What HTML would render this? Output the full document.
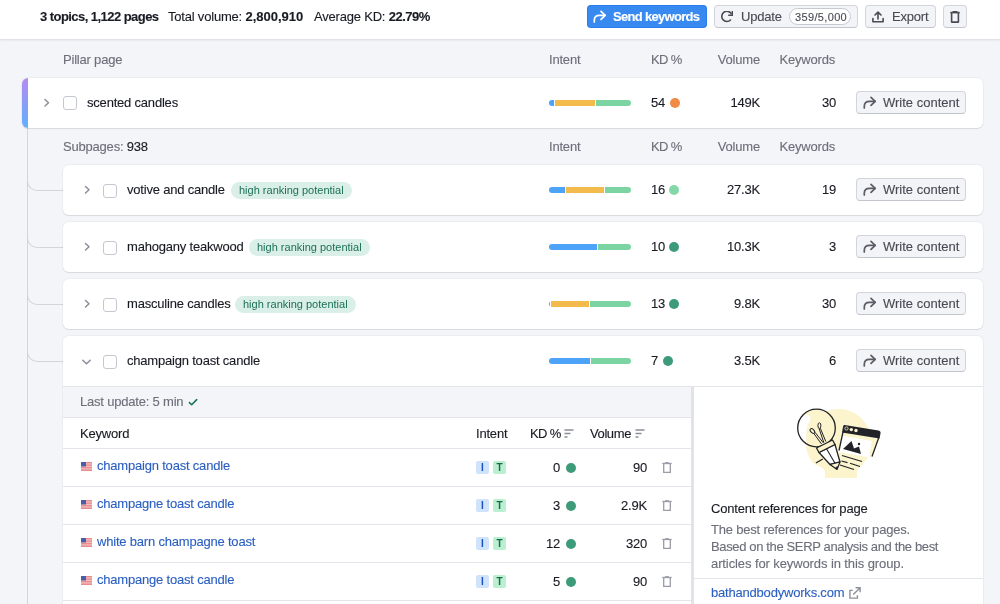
<!DOCTYPE html><html><head><meta charset="utf-8"><style>
*{box-sizing:border-box;margin:0;padding:0}
html,body{width:1000px;height:604px;overflow:hidden;background:#f4f5f9;font-family:"Liberation Sans",sans-serif;color:#191b23;font-size:13px;letter-spacing:-0.2px}
.a{position:absolute;white-space:nowrap;line-height:16px;will-change:transform;-webkit-text-stroke:0.12px}
b{letter-spacing:-0.5px}
.top{position:absolute;left:0;top:0;width:1000px;height:40px;background:#fff;border-bottom:1px solid #e2e3e9;box-shadow:0 1px 2px rgba(25,27,35,0.05)}
.g{color:#6c6e79}
.card{position:absolute;background:#fff;border-radius:6px;box-shadow:0 0 0 1px rgba(25,27,35,0.035),0 1px 1px rgba(25,27,35,0.09)}
.btn{position:absolute;height:23px;border:1px solid #d3d5dc;border-bottom-color:#c3c5cd;border-radius:4px;background:#f3f4f7;color:#484a54}
.chk{position:absolute;width:14px;height:14px;border:1px solid #c5c8d0;border-radius:3px;background:#fff}
.bar{position:absolute;height:6px;border-radius:3px;overflow:hidden;width:82px;background:#fff}
.bar i{position:absolute;top:0;height:6px}
.dot{position:absolute;width:10px;height:10px;border-radius:5px}
.tag{will-change:transform;position:absolute;height:17px;border-radius:9px;background:#d9efe7;color:#1d7058;font-size:11px;line-height:17px;padding:0 8px;letter-spacing:0}
.chev{position:absolute}
.blue{color:#2b5fc0}
.ib{will-change:transform;position:absolute;width:13px;height:13px;border-radius:2px;font-size:10px;line-height:13px;text-align:center;font-weight:bold;letter-spacing:0}
</style></head><body>
<div class="top"></div>
<div class="a" style="left:40px;top:9px;font-weight:bold;letter-spacing:-0.55px">3 topics, 1,122 pages</div>
<div class="a" style="left:168px;top:9px">Total volume: <b style="letter-spacing:0">2,800,910</b></div>
<div class="a" style="left:314px;top:9px">Average KD: <b>22.79%</b></div>
<div class="a" style="left:587px;top:5px;width:120px;height:23px;background:#3889f0;border-radius:4px;box-shadow:inset 0 0 0 1px rgba(0,90,220,0.25)"></div>
<div class="a" style="left:593px;top:10px;width:14px;height:13px"><svg width="14" height="13" viewBox="0 0 14 13" style="position:absolute;left:0;top:0"><path d="M1.3 12 V10.2 C1.3 7 3.3 5.3 6.5 5.3 H12" fill="none" stroke="#fff" stroke-width="1.7" stroke-linecap="round" stroke-linejoin="round"/><path d="M8 1.3 L12.2 5.3 L8 9.3" fill="none" stroke="#fff" stroke-width="1.7" stroke-linecap="round" stroke-linejoin="round"/></svg></div>
<div class="a" style="left:613px;top:9px;color:#fff;font-weight:bold;letter-spacing:-0.7px">Send keywords</div>
<div class="btn" style="left:714px;top:5px;width:144px"></div>
<svg class="a" style="left:721px;top:11px" width="12" height="12" viewBox="0 0 12 12"><path d="M9.5 9.0 A5.1 5.1 0 1 1 10.1 2.5" fill="none" stroke="#484a54" stroke-width="1.6" stroke-linecap="round"/><path d="M11.4 0.4 V4.3 H7.8" fill="none" stroke="#484a54" stroke-width="1.6" stroke-linecap="round" stroke-linejoin="round"/></svg>
<div class="a" style="left:741px;top:9px;color:#484a54">Update</div>
<div class="a" style="left:789px;top:8px;width:62px;height:17px;border:1px solid #c7c9d1;border-radius:9px;background:#fff"></div>
<div class="a" style="left:795px;top:9px;font-size:11px;line-height:16px;color:#484a54;letter-spacing:0.35px">359/5,000</div>
<div class="btn" style="left:865px;top:5px;width:71px"></div>
<svg class="a" style="left:872px;top:11px" width="12" height="12" viewBox="0 0 12 12"><path d="M6 8 V1.2 M3 4 L6 1.2 L9 4" fill="none" stroke="#484a54" stroke-width="1.6" stroke-linecap="round" stroke-linejoin="round"/><path d="M0.9 7.5 V10.8 H11.1 V7.5" fill="none" stroke="#484a54" stroke-width="1.6" stroke-linecap="round" stroke-linejoin="round"/></svg>
<div class="a" style="left:892px;top:9px;color:#484a54">Export</div>
<div class="btn" style="left:943px;top:5px;width:24px"></div>
<svg class="a" style="left:950px;top:11px" width="10" height="12" viewBox="0 0 10 12"><path d="M0.3 1.6 H9.7" stroke="#484a54" stroke-width="1.6"/><path d="M3.2 1.2 V0.6 H6.8 V1.2" stroke="#484a54" stroke-width="1.2" fill="none"/><path d="M1.6 2 V11.1 H8.4 V2" fill="none" stroke="#484a54" stroke-width="1.6" stroke-linejoin="round"/></svg>
<div class="a g" style="left:63px;top:52px">Pillar page</div>
<div class="a g" style="left:549px;top:52px">Intent</div>
<div class="a g" style="left:651px;top:52px;letter-spacing:-0.6px">KD %</div>
<div class="a g" style="left:680px;top:52px;width:80px;text-align:right">Volume</div>
<div class="a g" style="left:755px;top:52px;width:80px;text-align:right">Keywords</div>
<div class="a" style="left:27px;top:128px;width:1px;height:476px;background:#d3d5dc"></div>
<div class="a" style="left:27px;top:180px;width:36px;height:11px;border-left:1px solid #d3d5dc;border-bottom:1px solid #d3d5dc;border-bottom-left-radius:10px"></div>
<div class="a" style="left:27px;top:237px;width:36px;height:11px;border-left:1px solid #d3d5dc;border-bottom:1px solid #d3d5dc;border-bottom-left-radius:10px"></div>
<div class="a" style="left:27px;top:294px;width:36px;height:11px;border-left:1px solid #d3d5dc;border-bottom:1px solid #d3d5dc;border-bottom-left-radius:10px"></div>
<div class="a" style="left:27px;top:351px;width:36px;height:11px;border-left:1px solid #d3d5dc;border-bottom:1px solid #d3d5dc;border-bottom-left-radius:10px"></div>
<div class="card" style="left:22px;top:78px;width:961px;height:50px;overflow:hidden"><div style="position:absolute;left:0;top:0;width:6px;height:50px;background:linear-gradient(#b68af3,#60b0fa)"></div></div>
<svg class="a" style="left:43px;top:97px" width="9" height="12" viewBox="0 0 9 12"><path d="M2 2.5 L5.5 5.75 L2 9" fill="none" stroke="#8b8e9a" stroke-width="1.5" stroke-linecap="round" stroke-linejoin="round"/></svg>
<div class="chk" style="left:63px;top:96px"></div>
<div class="a" style="left:87px;top:95px">scented candles</div>
<div class="bar" style="left:549px;top:100px"><i style="left:0px;width:5px;background:#4da3f7"></i><i style="left:6px;width:40px;background:#f3bb4b"></i><i style="left:47px;width:35px;background:#7dd4a3"></i></div>
<div class="a" style="left:651px;top:95px">54</div>
<div class="dot" style="left:670px;top:98px;background:#f08a45"></div>
<div class="a" style="left:680px;top:95px;width:80px;text-align:right">149K</div>
<div class="a" style="left:756px;top:95px;width:80px;text-align:right">30</div>
<div class="btn" style="left:856px;top:91px;width:110px"></div>
<div class="a" style="left:863px;top:96px;width:14px;height:13px"><svg width="14" height="13" viewBox="0 0 14 13" style="position:absolute;left:0;top:0"><path d="M1.3 12 V10.2 C1.3 7 3.3 5.3 6.5 5.3 H12" fill="none" stroke="#5a5c66" stroke-width="1.7" stroke-linecap="round" stroke-linejoin="round"/><path d="M8 1.3 L12.2 5.3 L8 9.3" fill="none" stroke="#5a5c66" stroke-width="1.7" stroke-linecap="round" stroke-linejoin="round"/></svg></div>
<div class="a" style="left:883px;top:95px;color:#484a54;letter-spacing:0">Write content</div>
<div class="a g" style="left:63px;top:139px">Subpages: <span style="color:#191b23">938</span></div>
<div class="a g" style="left:549px;top:139px">Intent</div>
<div class="a g" style="left:651px;top:139px;letter-spacing:-0.6px">KD %</div>
<div class="a g" style="left:680px;top:139px;width:80px;text-align:right">Volume</div>
<div class="a g" style="left:755px;top:139px;width:80px;text-align:right">Keywords</div>
<div class="card" style="left:63px;top:165px;width:920px;height:50px"></div>
<svg class="a" style="left:83px;top:184px" width="9" height="12" viewBox="0 0 9 12"><path d="M2.5 2.5 L6.0 5.75 L2.5 9" fill="none" stroke="#8b8e9a" stroke-width="1.5" stroke-linecap="round" stroke-linejoin="round"/></svg>
<div class="chk" style="left:103px;top:184px"></div>
<div class="a" style="left:127px;top:182px">votive and candle</div>
<div class="tag" style="left:231px;top:182px">high ranking potential</div>
<div class="bar" style="left:549px;top:187px"><i style="left:0px;width:16px;background:#4da3f7"></i><i style="left:17px;width:38px;background:#f3bb4b"></i><i style="left:56px;width:26px;background:#7dd4a3"></i></div>
<div class="a" style="left:651px;top:182px">16</div>
<div class="dot" style="left:669px;top:185px;background:#84d8a8"></div>
<div class="a" style="left:680px;top:182px;width:80px;text-align:right">27.3K</div>
<div class="a" style="left:756px;top:182px;width:80px;text-align:right">19</div>
<div class="btn" style="left:856px;top:178px;width:110px"></div>
<div class="a" style="left:863px;top:183px;width:14px;height:13px"><svg width="14" height="13" viewBox="0 0 14 13" style="position:absolute;left:0;top:0"><path d="M1.3 12 V10.2 C1.3 7 3.3 5.3 6.5 5.3 H12" fill="none" stroke="#5a5c66" stroke-width="1.7" stroke-linecap="round" stroke-linejoin="round"/><path d="M8 1.3 L12.2 5.3 L8 9.3" fill="none" stroke="#5a5c66" stroke-width="1.7" stroke-linecap="round" stroke-linejoin="round"/></svg></div>
<div class="a" style="left:883px;top:182px;color:#484a54;letter-spacing:0">Write content</div>
<div class="card" style="left:63px;top:222px;width:920px;height:50px"></div>
<svg class="a" style="left:83px;top:241px" width="9" height="12" viewBox="0 0 9 12"><path d="M2.5 2.5 L6.0 5.75 L2.5 9" fill="none" stroke="#8b8e9a" stroke-width="1.5" stroke-linecap="round" stroke-linejoin="round"/></svg>
<div class="chk" style="left:103px;top:241px"></div>
<div class="a" style="left:127px;top:239px">mahogany teakwood</div>
<div class="tag" style="left:249px;top:239px">high ranking potential</div>
<div class="bar" style="left:549px;top:244px"><i style="left:0px;width:48px;background:#4da3f7"></i><i style="left:49px;width:33px;background:#7dd4a3"></i></div>
<div class="a" style="left:651px;top:239px">10</div>
<div class="dot" style="left:669px;top:242px;background:#3e9b7a"></div>
<div class="a" style="left:680px;top:239px;width:80px;text-align:right">10.3K</div>
<div class="a" style="left:756px;top:239px;width:80px;text-align:right">3</div>
<div class="btn" style="left:856px;top:235px;width:110px"></div>
<div class="a" style="left:863px;top:240px;width:14px;height:13px"><svg width="14" height="13" viewBox="0 0 14 13" style="position:absolute;left:0;top:0"><path d="M1.3 12 V10.2 C1.3 7 3.3 5.3 6.5 5.3 H12" fill="none" stroke="#5a5c66" stroke-width="1.7" stroke-linecap="round" stroke-linejoin="round"/><path d="M8 1.3 L12.2 5.3 L8 9.3" fill="none" stroke="#5a5c66" stroke-width="1.7" stroke-linecap="round" stroke-linejoin="round"/></svg></div>
<div class="a" style="left:883px;top:239px;color:#484a54;letter-spacing:0">Write content</div>
<div class="card" style="left:63px;top:279px;width:920px;height:50px"></div>
<svg class="a" style="left:83px;top:298px" width="9" height="12" viewBox="0 0 9 12"><path d="M2.5 2.5 L6.0 5.75 L2.5 9" fill="none" stroke="#8b8e9a" stroke-width="1.5" stroke-linecap="round" stroke-linejoin="round"/></svg>
<div class="chk" style="left:103px;top:298px"></div>
<div class="a" style="left:127px;top:296px">masculine candles</div>
<div class="tag" style="left:235px;top:296px">high ranking potential</div>
<div class="bar" style="left:549px;top:301px"><i style="left:0px;width:1px;background:#4da3f7"></i><i style="left:2px;width:38px;background:#f3bb4b"></i><i style="left:41px;width:41px;background:#7dd4a3"></i></div>
<div class="a" style="left:651px;top:296px">13</div>
<div class="dot" style="left:669px;top:299px;background:#3e9b7a"></div>
<div class="a" style="left:680px;top:296px;width:80px;text-align:right">9.8K</div>
<div class="a" style="left:756px;top:296px;width:80px;text-align:right">30</div>
<div class="btn" style="left:856px;top:292px;width:110px"></div>
<div class="a" style="left:863px;top:297px;width:14px;height:13px"><svg width="14" height="13" viewBox="0 0 14 13" style="position:absolute;left:0;top:0"><path d="M1.3 12 V10.2 C1.3 7 3.3 5.3 6.5 5.3 H12" fill="none" stroke="#5a5c66" stroke-width="1.7" stroke-linecap="round" stroke-linejoin="round"/><path d="M8 1.3 L12.2 5.3 L8 9.3" fill="none" stroke="#5a5c66" stroke-width="1.7" stroke-linecap="round" stroke-linejoin="round"/></svg></div>
<div class="a" style="left:883px;top:296px;color:#484a54;letter-spacing:0">Write content</div>
<div class="card" style="left:63px;top:336px;width:920px;height:290px;border-radius:6px 6px 0 0"></div>
<svg class="a" style="left:81px;top:358px" width="11" height="8" viewBox="0 0 11 8"><path d="M1.8 2.3 L5.5 5.8 L9.2 2.3" fill="none" stroke="#8b8e9a" stroke-width="1.5" stroke-linecap="round" stroke-linejoin="round"/></svg>
<div class="chk" style="left:103px;top:355px"></div>
<div class="a" style="left:127px;top:353px">champaign toast candle</div>
<div class="bar" style="left:549px;top:358px"><i style="left:0px;width:41px;background:#4da3f7"></i><i style="left:42px;width:40px;background:#7dd4a3"></i></div>
<div class="a" style="left:651px;top:353px">7</div>
<div class="dot" style="left:663px;top:356px;background:#3e9b7a"></div>
<div class="a" style="left:680px;top:353px;width:80px;text-align:right">3.5K</div>
<div class="a" style="left:756px;top:353px;width:80px;text-align:right">6</div>
<div class="btn" style="left:856px;top:349px;width:110px"></div>
<div class="a" style="left:863px;top:354px;width:14px;height:13px"><svg width="14" height="13" viewBox="0 0 14 13" style="position:absolute;left:0;top:0"><path d="M1.3 12 V10.2 C1.3 7 3.3 5.3 6.5 5.3 H12" fill="none" stroke="#5a5c66" stroke-width="1.7" stroke-linecap="round" stroke-linejoin="round"/><path d="M8 1.3 L12.2 5.3 L8 9.3" fill="none" stroke="#5a5c66" stroke-width="1.7" stroke-linecap="round" stroke-linejoin="round"/></svg></div>
<div class="a" style="left:883px;top:353px;color:#484a54;letter-spacing:0">Write content</div>
<div class="a" style="left:63px;top:386px;width:920px;height:1px;background:#e4e5eb"></div>
<div class="a" style="left:63px;top:387px;width:628px;height:31px;background:#f4f5f9;border-bottom:1px solid #e4e5eb"></div>
<div class="a g" style="left:80px;top:394px">Last update: 5 min</div>
<svg class="a" style="left:188px;top:398px" width="10" height="8" viewBox="0 0 10 8"><path d="M1.4 4.6 L3.7 6.7 L8.7 1.6" fill="none" stroke="#14704f" stroke-width="1.5" stroke-linecap="round" stroke-linejoin="round"/></svg>
<div class="a" style="left:63px;top:448px;width:628px;height:1px;background:#e4e5eb"></div>
<div class="a" style="left:80px;top:426px">Keyword</div>
<div class="a" style="left:476px;top:426px">Intent</div>
<div class="a" style="left:530px;top:426px;letter-spacing:-0.6px">KD %</div>
<div class="a" style="left:590px;top:426px;letter-spacing:-0.4px">Volume</div>
<svg class="a" style="left:564px;top:429px" width="10" height="9" viewBox="0 0 10 9"><path d="M0.5 1 H9.5 M0.5 4.5 H6.5 M0.5 8 H3.5" stroke="#8b8e9a" stroke-width="1.3"/></svg>
<svg class="a" style="left:635px;top:429px" width="10" height="9" viewBox="0 0 10 9"><path d="M0.5 1 H9.5 M0.5 4.5 H6.5 M0.5 8 H3.5" stroke="#8b8e9a" stroke-width="1.3"/></svg>
<div class="a" style="left:691px;top:387px;width:3px;height:217px;background:#e2e3e9"></div>
<svg class="a" style="left:81px;top:462px" width="11" height="9" viewBox="0 0 11 9"><rect width="11" height="9" fill="#e98c8e"/><rect y="1.3" width="11" height="1.2" fill="#fff" opacity=".45"/><rect y="3.8" width="11" height="1.2" fill="#fff" opacity=".45"/><rect y="6.3" width="11" height="1.2" fill="#fff" opacity=".45"/><rect width="5" height="4.5" fill="#4a5fa8"/></svg>
<div class="a blue" style="left:97px;top:458px">champaign toast candle</div>
<div class="ib" style="left:476px;top:461px;background:#cfe4fb;color:#1a50c4">I</div>
<div class="ib" style="left:493px;top:461px;background:#baf0d0;color:#176a50">T</div>
<div class="a" style="left:500px;top:460px;width:60px;text-align:right">0</div>
<div class="dot" style="left:566px;top:463px;background:#3e9b7a"></div>
<div class="a" style="left:567px;top:460px;width:80px;text-align:right">90</div>
<svg class="a" style="left:662px;top:462px" width="10" height="11" viewBox="0 0 10 11"><path d="M0.3 1.5 H9.7" stroke="#9a9ca6" stroke-width="1.3"/><path d="M3.3 1.2 V0.6 H6.7 V1.2" stroke="#9a9ca6" stroke-width="1" fill="none"/><path d="M1.7 2 V10.3 H8.3 V2" fill="none" stroke="#9a9ca6" stroke-width="1.3"/></svg>
<div class="a" style="left:63px;top:486px;width:628px;height:1px;background:#e4e5eb"></div>
<svg class="a" style="left:81px;top:500px" width="11" height="9" viewBox="0 0 11 9"><rect width="11" height="9" fill="#e98c8e"/><rect y="1.3" width="11" height="1.2" fill="#fff" opacity=".45"/><rect y="3.8" width="11" height="1.2" fill="#fff" opacity=".45"/><rect y="6.3" width="11" height="1.2" fill="#fff" opacity=".45"/><rect width="5" height="4.5" fill="#4a5fa8"/></svg>
<div class="a blue" style="left:97px;top:496px">champagne toast candle</div>
<div class="ib" style="left:476px;top:499px;background:#cfe4fb;color:#1a50c4">I</div>
<div class="ib" style="left:493px;top:499px;background:#baf0d0;color:#176a50">T</div>
<div class="a" style="left:500px;top:498px;width:60px;text-align:right">3</div>
<div class="dot" style="left:566px;top:501px;background:#3e9b7a"></div>
<div class="a" style="left:567px;top:498px;width:80px;text-align:right">2.9K</div>
<svg class="a" style="left:662px;top:500px" width="10" height="11" viewBox="0 0 10 11"><path d="M0.3 1.5 H9.7" stroke="#9a9ca6" stroke-width="1.3"/><path d="M3.3 1.2 V0.6 H6.7 V1.2" stroke="#9a9ca6" stroke-width="1" fill="none"/><path d="M1.7 2 V10.3 H8.3 V2" fill="none" stroke="#9a9ca6" stroke-width="1.3"/></svg>
<div class="a" style="left:63px;top:524px;width:628px;height:1px;background:#e4e5eb"></div>
<svg class="a" style="left:81px;top:538px" width="11" height="9" viewBox="0 0 11 9"><rect width="11" height="9" fill="#e98c8e"/><rect y="1.3" width="11" height="1.2" fill="#fff" opacity=".45"/><rect y="3.8" width="11" height="1.2" fill="#fff" opacity=".45"/><rect y="6.3" width="11" height="1.2" fill="#fff" opacity=".45"/><rect width="5" height="4.5" fill="#4a5fa8"/></svg>
<div class="a blue" style="left:97px;top:534px">white barn champagne toast</div>
<div class="ib" style="left:476px;top:537px;background:#cfe4fb;color:#1a50c4">I</div>
<div class="ib" style="left:493px;top:537px;background:#baf0d0;color:#176a50">T</div>
<div class="a" style="left:500px;top:536px;width:60px;text-align:right">12</div>
<div class="dot" style="left:566px;top:539px;background:#3e9b7a"></div>
<div class="a" style="left:567px;top:536px;width:80px;text-align:right">320</div>
<svg class="a" style="left:662px;top:538px" width="10" height="11" viewBox="0 0 10 11"><path d="M0.3 1.5 H9.7" stroke="#9a9ca6" stroke-width="1.3"/><path d="M3.3 1.2 V0.6 H6.7 V1.2" stroke="#9a9ca6" stroke-width="1" fill="none"/><path d="M1.7 2 V10.3 H8.3 V2" fill="none" stroke="#9a9ca6" stroke-width="1.3"/></svg>
<div class="a" style="left:63px;top:562px;width:628px;height:1px;background:#e4e5eb"></div>
<svg class="a" style="left:81px;top:576px" width="11" height="9" viewBox="0 0 11 9"><rect width="11" height="9" fill="#e98c8e"/><rect y="1.3" width="11" height="1.2" fill="#fff" opacity=".45"/><rect y="3.8" width="11" height="1.2" fill="#fff" opacity=".45"/><rect y="6.3" width="11" height="1.2" fill="#fff" opacity=".45"/><rect width="5" height="4.5" fill="#4a5fa8"/></svg>
<div class="a blue" style="left:97px;top:572px">champange toast candle</div>
<div class="ib" style="left:476px;top:575px;background:#cfe4fb;color:#1a50c4">I</div>
<div class="ib" style="left:493px;top:575px;background:#baf0d0;color:#176a50">T</div>
<div class="a" style="left:500px;top:574px;width:60px;text-align:right">5</div>
<div class="dot" style="left:566px;top:577px;background:#3e9b7a"></div>
<div class="a" style="left:567px;top:574px;width:80px;text-align:right">90</div>
<svg class="a" style="left:662px;top:576px" width="10" height="11" viewBox="0 0 10 11"><path d="M0.3 1.5 H9.7" stroke="#9a9ca6" stroke-width="1.3"/><path d="M3.3 1.2 V0.6 H6.7 V1.2" stroke="#9a9ca6" stroke-width="1" fill="none"/><path d="M1.7 2 V10.3 H8.3 V2" fill="none" stroke="#9a9ca6" stroke-width="1.3"/></svg>
<div class="a" style="left:63px;top:600px;width:628px;height:1px;background:#e4e5eb"></div>
<div class="a" style="left:711px;top:501px">Content references for page</div>
<div class="a g" style="left:711px;top:521px;line-height:17px;white-space:normal;width:260px">The best references for your pages.<br><span style="letter-spacing:-0.36px">Based on the SERP analysis and the best</span><br><span style="letter-spacing:-0.1px">articles for keywords in this group.</span></div>
<div class="a" style="left:694px;top:578px;width:289px;height:1px;background:#e4e5eb"></div>
<div class="a blue" style="left:711px;top:585px">bathandbodyworks.com</div>
<svg class="a" style="left:849px;top:587px" width="12" height="12" viewBox="0 0 12 12"><path d="M3.8 3.4 H0.9 V11.1 H8.4 V8.2" fill="none" stroke="#8e909b" stroke-width="1.4"/><path d="M6.6 0.8 H11.1 V5.3 M11 0.9 L4.2 7.5" fill="none" stroke="#8e909b" stroke-width="1.4"/></svg>
<svg class="a" style="left:790px;top:400px" width="100" height="82" viewBox="0 0 100 82">
<path d="M35 78 L35 72 Q35 68 24 64 A33 33 0 1 1 73 64 Q67 68 67 72 L67 78 Z" fill="#fbf4cd"/>
<circle cx="26.5" cy="28" r="18.8" fill="#fbf4cd"/>
<path d="M13.5 14.8 C17.5 13.8 21.5 16.5 20.3 20 C17.5 23.5 16 30 16.3 36.5 C16.5 40 15.5 42.5 14 44 C9.5 39.5 8 34 8.2 28 C8.5 22 10.5 17.5 13.5 14.8 Z" fill="#fff"/><circle cx="26.5" cy="28" r="18.8" fill="none" stroke="#222328" stroke-width="1.3"/>
<ellipse cx="22.4" cy="31" rx="1.7" ry="2.8" transform="rotate(-45 22.4 31)" fill="none" stroke="#222328" stroke-width="1"/>
<ellipse cx="29.4" cy="25.6" rx="1.5" ry="2.8" fill="none" stroke="#222328" stroke-width="1"/>
<path d="M23.6 33.2 L31.5 44 M25 32.3 L33.5 43 M29 28.3 L33.8 42.5 M30.3 28.2 L35.8 41.5" stroke="#222328" stroke-width="1" fill="none"/>
<path d="M29 52.5 L45 44.5 L50 62 L40 64.5 Z" fill="#fff" stroke="#222328" stroke-width="1.3" stroke-linejoin="round"/>
<path d="M36.5 48.8 L45 63.2" stroke="#222328" stroke-width="1.1"/>
<path d="M40 64.5 L50 62 L47 69.5 Z" fill="#fbf4cd" stroke="#222328" stroke-width="1.2" stroke-linejoin="round"/>
<path d="M45.3 67 L48.3 66.2 L47 69.7 Z" fill="#222328"/>
<path d="M26.5 48 L42.5 40 L45 44.5 L29 52.5 Z" fill="#fbf4cd" stroke="#222328" stroke-width="1.3" stroke-linejoin="round"/>
<path d="M53 32 L89 38 L82 57 L48.5 54 Z" fill="#fbf4cd"/>
<path d="M51.5 35.5 L82 41 L79 57.5 L48.5 52 Z" fill="#fff"/>
<path d="M89 37 L82 56.5 M53 32 L49 50.5" fill="none" stroke="#222328" stroke-width="1.3"/>
<path d="M54.5 25 L88.5 30.5 Q91 31 90.5 33.5 L89.5 38.5 L52 32.5 L53 27 Q53.3 24.8 54.5 25 Z" fill="#222328"/>
<circle cx="56.5" cy="28.5" r="1.6" fill="#222328" stroke="#fbf4cd" stroke-width=".8"/><circle cx="61.3" cy="29.6" r="1.7" fill="#fbf4cd"/><circle cx="66" cy="30.5" r="1.7" fill="#fbf4cd"/>
<path d="M53 49 L61.5 41 L64 48.5 L69 46.5 L71 54 Z" fill="#222328"/>
<circle cx="69" cy="44" r="1.2" fill="#222328"/>
<path d="M25.9 63 L32.8 58.9 M52 55.5 L72 61.5 M51.5 61 L57.5 62.6 M60 63.3 L70 66.5 M50 65 L64 69.5" stroke="#222328" stroke-width="1.2"/>
</svg>
</body></html>
